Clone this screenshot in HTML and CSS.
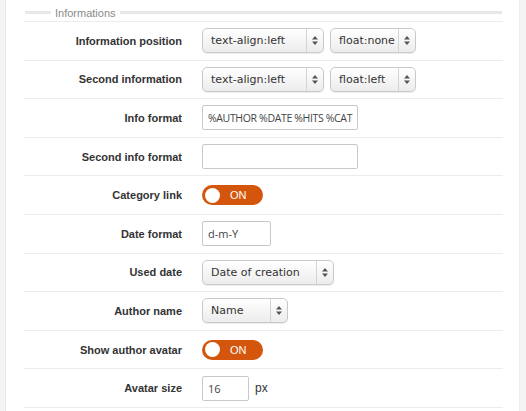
FILE: index.html
```html
<!DOCTYPE html>
<html>
<head>
<meta charset="utf-8">
<link rel="stylesheet" href="styles.css">
</head>
<body>
<div class="page">
  <div class="side side-left"></div>
  <div class="main">
    <div class="legend"><span class="bar bar-short"></span><span class="legend-text">Informations</span><span class="bar bar-long"></span></div>
    <div class="rows">
      <div class="row">
        <div class="label">Information position</div>
        <div class="field">
          <div class="select w121"><span class="sel-text">text-align:left</span><span class="arrow"><svg width="6" height="9" viewBox="0 0 6 9"><path d="M3 0L6 3.5H0Z M3 9L0 5.5H6Z" fill="#555"/></svg></span></div>
          <div class="select w86"><span class="sel-text">float:none</span><span class="arrow"><svg width="6" height="9" viewBox="0 0 6 9"><path d="M3 0L6 3.5H0Z M3 9L0 5.5H6Z" fill="#555"/></svg></span></div>
        </div>
      </div>
      <div class="row">
        <div class="label">Second information</div>
        <div class="field">
          <div class="select w121"><span class="sel-text">text-align:left</span><span class="arrow"><svg width="6" height="9" viewBox="0 0 6 9"><path d="M3 0L6 3.5H0Z M3 9L0 5.5H6Z" fill="#555"/></svg></span></div>
          <div class="select w86"><span class="sel-text">float:left</span><span class="arrow"><svg width="6" height="9" viewBox="0 0 6 9"><path d="M3 0L6 3.5H0Z M3 9L0 5.5H6Z" fill="#555"/></svg></span></div>
        </div>
      </div>
      <div class="row">
        <div class="label">Info format</div>
        <div class="field"><div class="input w156 tight">%AUTHOR %DATE %HITS %CAT</div></div>
      </div>
      <div class="row">
        <div class="label">Second info format</div>
        <div class="field"><div class="input w156"></div></div>
      </div>
      <div class="row">
        <div class="label">Category link</div>
        <div class="field"><div class="toggle"><span class="knob"></span><span class="toggle-text">ON</span></div></div>
      </div>
      <div class="row">
        <div class="label">Date format</div>
        <div class="field"><div class="input w69">d-m-Y</div></div>
      </div>
      <div class="row">
        <div class="label">Used date</div>
        <div class="field">
          <div class="select w131"><span class="sel-text">Date of creation</span><span class="arrow"><svg width="6" height="9" viewBox="0 0 6 9"><path d="M3 0L6 3.5H0Z M3 9L0 5.5H6Z" fill="#555"/></svg></span></div>
        </div>
      </div>
      <div class="row">
        <div class="label">Author name</div>
        <div class="field">
          <div class="select w85"><span class="sel-text">Name</span><span class="arrow"><svg width="6" height="9" viewBox="0 0 6 9"><path d="M3 0L6 3.5H0Z M3 9L0 5.5H6Z" fill="#555"/></svg></span></div>
        </div>
      </div>
      <div class="row">
        <div class="label">Show author avatar</div>
        <div class="field"><div class="toggle"><span class="knob"></span><span class="toggle-text">ON</span></div></div>
      </div>
      <div class="row">
        <div class="label">Avatar size</div>
        <div class="field"><div class="input w47">16</div><span class="unit">px</span></div>
      </div>
    </div>
  </div>
  <div class="side side-right"></div>
</div>
</body>
</html>
```
FILE: styles.css
```css
html, body {
  margin: 0;
  padding: 0;
  background: #fff;
}
.page {
  display: flex;
  width: 526px;
  height: 411px;
  overflow: hidden;
}
.side {
  background: #f4f4f4;
  flex: none;
}
.side-left {
  width: 5px;
  border-right: 1px solid #e8e8e8;
}
.side-right {
  width: 6px;
  border-left: 1px solid #ececec;
}
.main {
  flex: 1;
  padding: 0 16px 0 18px;
}
.legend {
  height: 21px;
  display: flex;
  align-items: center;
  padding-top: 4px;
  box-sizing: border-box;
}
.bar {
  height: 3px;
  background: #e8e8e8;
  display: block;
}
.bar-short {
  width: 26px;
  margin-left: 1px;
}
.bar-long {
  flex: 1;
  margin-right: 1px;
}
.legend-text {
  font-family: "Liberation Sans", Arial, sans-serif;
  font-size: 11px;
  color: #8a8a8a;
  padding: 0 4px 0 4px;
  line-height: 12px;
}
.row {
  display: flex;
  align-items: center;
  height: 37.6px;
  border-top: 1px solid #ececec;
}
.row:last-child {
  border-bottom: 1px solid #ececec;
}
.label {
  width: 158px;
  text-align: right;
  font-family: "Liberation Sans", Arial, sans-serif;
  font-weight: bold;
  font-size: 11px;
  color: #333;
  flex: none;
}
.field {
  margin-left: 20px;
  display: flex;
  align-items: center;
  gap: 6px;
}
.select {
  height: 25px;
  box-sizing: border-box;
  border: 1px solid #c9c9c9;
  border-radius: 5px;
  background: linear-gradient(#ffffff, #ececec);
  box-shadow: 0 1px 1px rgba(0,0,0,0.08), inset 0 1px 0 #fff;
  display: flex;
  align-items: stretch;
  font-family: "DejaVu Sans", Verdana, sans-serif;
  font-size: 11px;
  color: #333;
}
.sel-text {
  flex: 1;
  display: flex;
  align-items: center;
  padding-left: 8px;
  white-space: nowrap;
  overflow: hidden;
}
.arrow {
  width: 16px;
  border-left: 1px solid #d4d4d4;
  display: flex;
  align-items: center;
  justify-content: center;
  flex: none;
}
.w121 { width: 122px; }
.w86 { width: 86px; }
.w131 { width: 132px; }
.w85 { width: 86px; }
.input {
  height: 25px;
  box-sizing: border-box;
  border: 1px solid #c8c8c8;
  border-radius: 2px;
  background: #fff;
  font-family: "Open Sans", sans-serif;
  font-size: 11px;
  color: #444;
  padding-left: 5px;
  display: flex;
  align-items: center;
  white-space: nowrap;
  overflow: hidden;
}
.tight {
  font-size: 10.5px;
  letter-spacing: -0.35px;
}
.w156 { width: 156px; }
.w69 { width: 69px; }
.w47 { width: 47px; }
.unit {
  font-family: "Liberation Sans", Arial, sans-serif;
  font-size: 12px;
  color: #333;
}
.toggle {
  width: 61px;
  height: 20px;
  border-radius: 10px;
  background: #d3560c;
  display: flex;
  align-items: center;
  box-sizing: border-box;
  padding-left: 3px;
}
.knob {
  width: 15px;
  height: 15px;
  border-radius: 50%;
  background: #fff;
  flex: none;
}
.toggle-text {
  font-family: "Liberation Sans", Arial, sans-serif;
  font-size: 11px;
  color: #fff;
  margin-left: 10px;
}
```
